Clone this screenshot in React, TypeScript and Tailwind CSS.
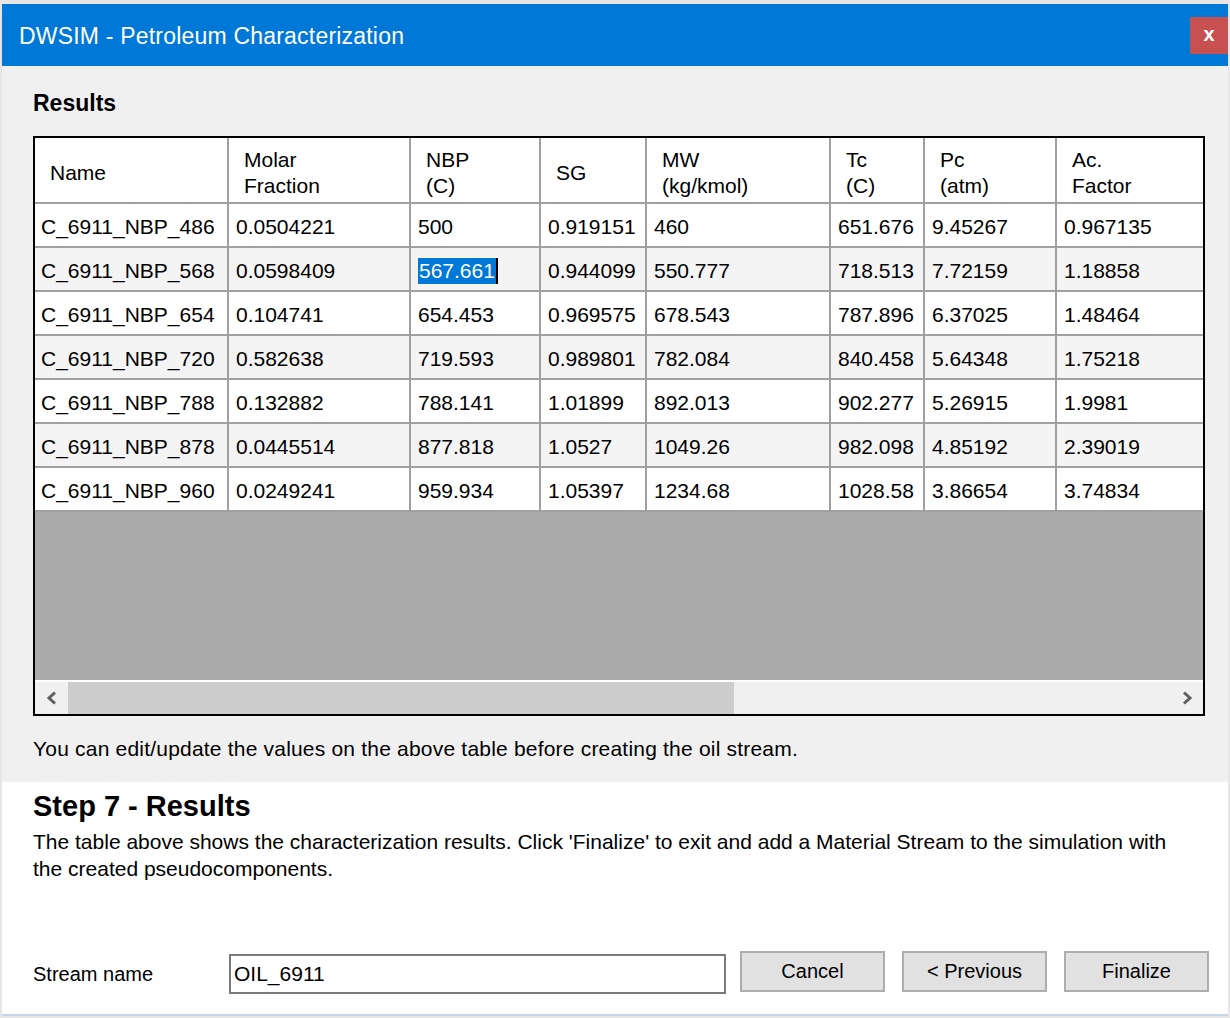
const columns = [
  { title: ["Name"], width: "w-[194px]" },
  { title: ["Molar", "Fraction"], width: "w-[182px]" },
  { title: ["NBP", "(C)"], width: "w-[130px]" },
  { title: ["SG"], width: "w-[106px]" },
  { title: ["MW", "(kg/kmol)"], width: "w-[184px]" },
  { title: ["Tc", "(C)"], width: "w-[94px]" },
  { title: ["Pc", "(atm)"], width: "w-[132px]" },
  { title: ["Ac.", "Factor"], width: "w-[146px]" },
]

const rows = [
  ["C_6911_NBP_486", "0.0504221", "500", "0.919151", "460", "651.676", "9.45267", "0.967135"],
  ["C_6911_NBP_568", "0.0598409", "567.661", "0.944099", "550.777", "718.513", "7.72159", "1.18858"],
  ["C_6911_NBP_654", "0.104741", "654.453", "0.969575", "678.543", "787.896", "6.37025", "1.48464"],
  ["C_6911_NBP_720", "0.582638", "719.593", "0.989801", "782.084", "840.458", "5.64348", "1.75218"],
  ["C_6911_NBP_788", "0.132882", "788.141", "1.01899", "892.013", "902.277", "5.26915", "1.9981"],
  ["C_6911_NBP_878", "0.0445514", "877.818", "1.0527", "1049.26", "982.098", "4.85192", "2.39019"],
  ["C_6911_NBP_960", "0.0249241", "959.934", "1.05397", "1234.68", "1028.58", "3.86654", "3.74834"],
]

function ResultsGrid() {
  return (
    <div className="w-[1172px] h-[580px] border-2 border-black flex flex-col bg-white">
      {/* header */}
      <div className="flex h-[66px] shrink-0">
        {columns.map((col, i) => (
          <div
            key={i}
            className={`${col.width} h-full flex flex-col justify-center pl-[15px] pt-[6px] border-b-2 border-[#a0a0a0] leading-[26px] ${i < columns.length - 1 ? "border-r-2" : ""}`}
          >
            {col.title.map((t) => (
              <span key={t}>{t}</span>
            ))}
          </div>
        ))}
      </div>

      {/* rows */}
      {rows.map((row, r) => (
        <div key={r} className={`flex h-[44px] shrink-0 ${r % 2 === 1 ? "bg-[#f4f4f4]" : "bg-white"}`}>
          {row.map((cell, c) => (
            <div
              key={c}
              className={`${columns[c].width} h-full flex items-center pt-[4px] ${c === 0 ? "pl-[6px]" : "pl-[7px]"} border-b-2 border-[#a0a0a0] ${c < row.length - 1 ? "border-r-2" : ""}`}
            >
              {r === 1 && c === 2 ? (
                <span className="flex items-center">
                  <span className="bg-[#0078d7] text-white px-[1px] leading-[26px]">{cell}</span>
                  <span className="w-[2px] h-[26px] bg-black"></span>
                </span>
              ) : (
                cell
              )}
            </div>
          ))}
        </div>
      ))}

      {/* empty area */}
      <div className="flex-1 bg-[#ababab]"></div>

      {/* horizontal scrollbar */}
      <div className="h-[34px] shrink-0 border-t-2 border-white bg-[#f0f0f0] flex items-stretch">
        <div className="w-[33px] flex items-center justify-center">
          <svg width="14" height="16" viewBox="0 0 14 16">
            <path d="M10 2.5 L4 8 L10 13.5" fill="none" stroke="#5f5f5f" strokeWidth="3" />
          </svg>
        </div>
        <div className="w-[666px] bg-[#cdcdcd]"></div>
        <div className="flex-1"></div>
        <div className="w-[33px] flex items-center justify-center">
          <svg width="14" height="16" viewBox="0 0 14 16">
            <path d="M4 2.5 L10 8 L4 13.5" fill="none" stroke="#5f5f5f" strokeWidth="3" />
          </svg>
        </div>
      </div>
    </div>
  )
}

export default function App() {
  return (
    <div
      className="w-[1230px] h-[1018px] bg-[#e6e6e6] pt-[4px] px-[2px] overflow-hidden text-[#000] text-[21px]"
      style={{ fontFamily: '"Liberation Sans", Arial, sans-serif' }}
    >
      <div className="h-[1012px] flex flex-col border-b-2 border-[#c5d6e8]">
        {/* Title bar */}
        <div className="h-[62px] bg-[#0078d7] flex items-center justify-between pl-[17px] pr-0 shrink-0">
          <span className="text-white text-[23px] tracking-[0.2px] pt-[2px]">DWSIM - Petroleum Characterization</span>
          <div className="w-[38px] h-[37px] bg-[#c75050] flex items-center justify-center text-white font-bold text-[20px] leading-none pb-[3px]">
            x
          </div>
        </div>

        {/* Gray body */}
        <div className="bg-[#f0f0f0] h-[716px] shrink-0 pl-[31px] pt-[24px]">
          <div className="font-bold text-[23px] leading-[26px] mb-[20px]">Results</div>
          <ResultsGrid />
          <div className="mt-[20px] text-[21px] leading-[26px] tracking-[0.2px]">
            You can edit/update the values on the above table before creating the oil stream.
          </div>
        </div>

        {/* White step section */}
        <div className="bg-white flex-1 pl-[31px] pt-[8px] flex flex-col">
          <div className="font-bold text-[29px] leading-[32px]">Step 7 - Results</div>
          <div className="text-[21px] leading-[27px] mt-[6px] whitespace-nowrap">
            The table above shows the characterization results. Click 'Finalize' to exit and add a Material Stream to the simulation with
            <br />
            the created pseudocomponents.
          </div>

          <div className="flex items-center mt-[72px]">
            <div className="w-[196px] text-[20px]">Stream name</div>
            <div className="w-[497px] h-[40px] border-2 border-[#7a7a7a] bg-white flex items-center pl-[3px] text-[21px]">
              OIL_6911
            </div>
            <div className="flex gap-[17px] ml-[14px] -mt-[6px]">
              {["Cancel", "< Previous", "Finalize"].map((b) => (
                <div
                  key={b}
                  className="w-[145px] h-[41px] bg-[#e1e1e1] border-2 border-[#adadad] flex items-center justify-center text-[20px]"
                >
                  {b}
                </div>
              ))}
            </div>
          </div>
        </div>
      </div>
    </div>
  )
}
